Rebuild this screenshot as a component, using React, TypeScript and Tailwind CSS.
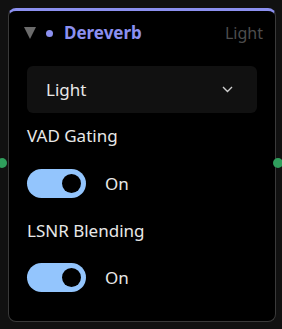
import React from "react";

function Toggle({ label }: { label: string }) {
  return (
    <div className="flex items-center h-[29px]">
      <div className="relative w-[59px] h-[29px] rounded-full bg-[#93c5fd]">
        <div className="absolute right-[5px] top-[5px] w-[19px] h-[19px] rounded-full bg-black" />
      </div>
      <span className="ml-[19px] text-[17px] text-[#e8e8e8]">{label}</span>
    </div>
  );
}

export default function App() {
  return (
    <div
      className="relative w-[282px] h-[329px] overflow-hidden bg-[#111111] p-2"
      style={{ fontFamily: '"Noto Sans", "Open Sans", sans-serif' }}
    >
      <div className="absolute left-[-3px] top-[158px] w-[10px] h-[10px] rounded-full bg-[#2f9e5c]" />
      <div className="relative w-[268px] h-[314px] rounded-lg border border-[#3a3a3a] border-t-[3px] border-t-[#8c90f0] bg-black flex flex-col">
        <div className="flex items-center h-[44px] pl-[15px] pr-[12px]">
          <svg width="12" height="12" viewBox="0 0 12 12">
            <path d="M0 0 L12 0 L6 12 Z" fill="#6b6b6b" />
          </svg>
          <div className="ml-[10px] w-[7px] h-[7px] rounded-full bg-[#8c90f0]" />
          <span className="ml-[11px] text-[17px] font-bold text-[#8c90f0]">Dereverb</span>
          <span className="ml-auto text-[16px] text-[#4d4d4d]">Light</span>
        </div>
        <div className="mt-[11px] mx-[18px] h-[47px] rounded-md bg-[#111111] flex items-center pl-[19px] pr-[24px]">
          <span className="text-[17px] text-[#e8e8e8]">Light</span>
          <svg className="ml-auto" width="11" height="7" viewBox="0 0 11 7">
            <path d="M1 1 L5.5 5.5 L10 1" stroke="#cfcfcf" strokeWidth="1.4" fill="none" />
          </svg>
        </div>
        <div className="px-[18px] flex flex-col">
          <div className="mt-[11px] h-[24px] flex items-center text-[17px] text-[#e8e8e8]">VAD Gating</div>
          <div className="mt-[21px]">
            <Toggle label="On" />
          </div>
          <div className="mt-[21px] h-[24px] flex items-center text-[17px] text-[#e8e8e8]">LSNR Blending</div>
          <div className="mt-[20px]">
            <Toggle label="On" />
          </div>
        </div>
      </div>
      <div className="absolute left-[273px] top-[158px] w-[10px] h-[10px] rounded-full bg-[#2f9e5c]" />
    </div>
  );
}
